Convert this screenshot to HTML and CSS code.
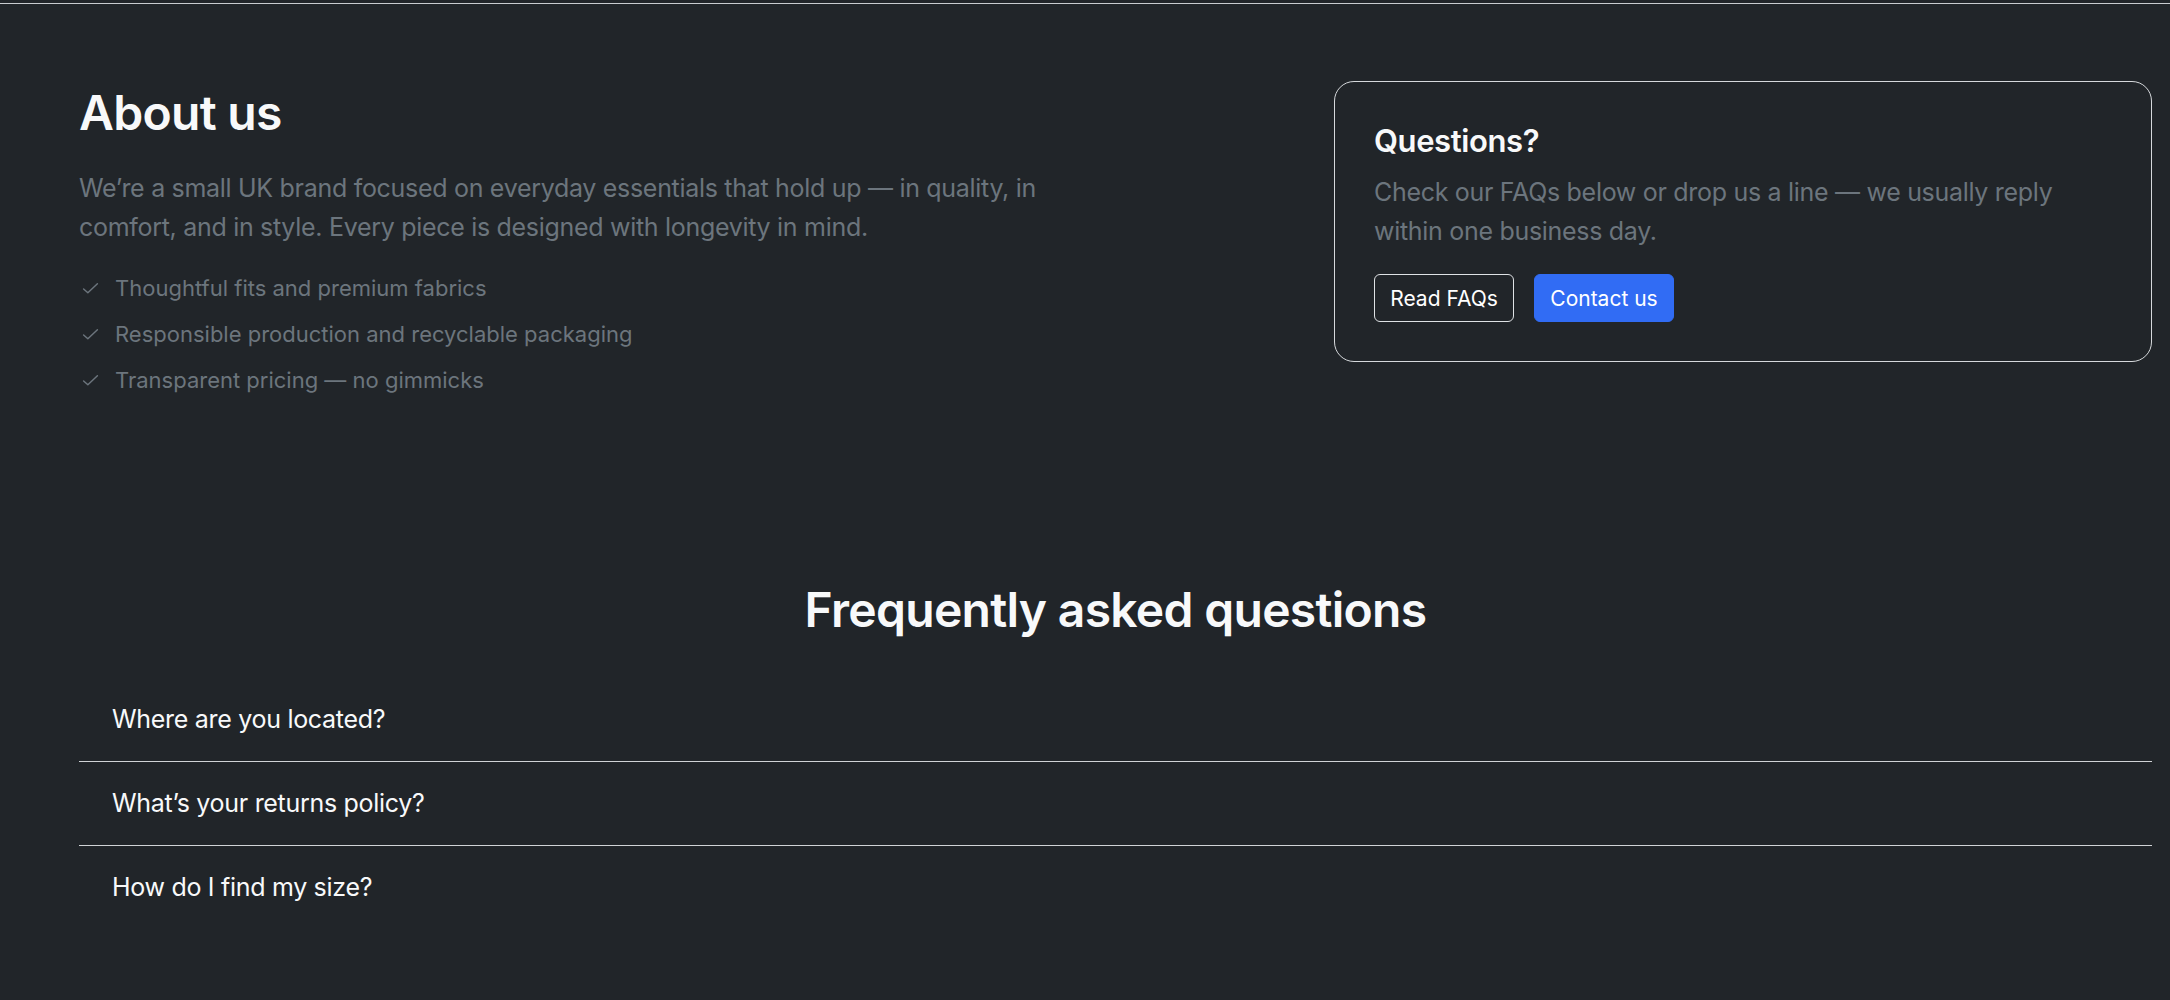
FILE: index.html
```html
<!DOCTYPE html>
<html lang="en">
<head>
<meta charset="utf-8">
<title>About us</title>
<link rel="stylesheet" href="styles.css">
</head>
<body>
<div class="page">
  <section class="about">
    <div class="about-text">
      <h1 class="title">About us</h1>
      <p class="lead">We’re a small UK brand focused on everyday essentials that hold up — in quality, in comfort, and in style. Every piece is designed with longevity in mind.</p>
      <ul class="checklist">
        <li><svg class="check" viewBox="0 0 16 16" aria-hidden="true"><path d="M1.5 8.5 L5.5 12 L14.5 3.5"/></svg><span>Thoughtful fits and premium fabrics</span></li>
        <li><svg class="check" viewBox="0 0 16 16" aria-hidden="true"><path d="M1.5 8.5 L5.5 12 L14.5 3.5"/></svg><span>Responsible production and recyclable packaging</span></li>
        <li><svg class="check" viewBox="0 0 16 16" aria-hidden="true"><path d="M1.5 8.5 L5.5 12 L14.5 3.5"/></svg><span>Transparent pricing — no gimmicks</span></li>
      </ul>
    </div>
    <aside class="card">
      <h2 class="card-title">Questions?</h2>
      <p class="card-text">Check our FAQs below or drop us a line — we usually reply within one business day.</p>
      <div class="actions">
        <a class="btn btn-outline" href="#faq">Read FAQs</a>
        <a class="btn btn-primary" href="#contact">Contact us</a>
      </div>
    </aside>
  </section>

  <section class="faq" id="faq">
    <h2 class="title faq-title">Frequently asked questions</h2>
    <div class="accordion">
      <div class="acc-item"><button class="acc-btn" type="button">Where are you located?</button></div>
      <div class="acc-item"><button class="acc-btn" type="button">What’s your returns policy?</button></div>
      <div class="acc-item"><button class="acc-btn" type="button">How do I find my size?</button></div>
    </div>
  </section>
</div>
</body>
</html>
```

FILE: styles.css
```css
html {
  background: #212529;
}
body {
  margin: 0;
  padding-top: 3px;
  background: #212529;
  color: #f8f9fa;
  font-family: Inter, "Noto Sans", "Liberation Sans", sans-serif;
  min-height: 997px;
}
.page {
  border-top: 1px solid #c9ccd0;
  padding: 0 18px 0 79px;
}
.about {
  display: grid;
  grid-template-columns: 1fr 818px;
  column-gap: 40px;
  align-items: start;
  padding-top: 77px;
}
.title {
  margin: 0;
  font-size: 48px;
  line-height: 1.2;
  font-weight: 600;
  letter-spacing: -0.7px;
  color: #f8f9fa;
}
.about-text .title {
  margin-top: 3px;
}
.lead {
  margin: 27px 0 0;
  font-size: 25px;
  line-height: 39px;
  letter-spacing: -0.3px;
  color: #6c757d;
  max-width: 990px;
}
.checklist {
  list-style: none;
  margin: 26px 0 0;
  padding: 0;
  display: flex;
  flex-direction: column;
  gap: 14.5px;
}
.checklist li {
  display: flex;
  align-items: center;
  gap: 16px;
  font-size: 22px;
  line-height: 31.5px;
  color: #6c757d;
  padding-left: 3px;
}
.check {
  width: 17px;
  height: 17px;
  flex: none;
  fill: none;
  stroke: #6c757d;
  stroke-width: 1.4;
  stroke-linecap: round;
  stroke-linejoin: round;
}
.card {
  border: 1px solid #d6d9dc;
  border-radius: 20px;
  padding: 40px 39px 39px;
}
.card-title {
  margin: 0;
  font-size: 31px;
  line-height: 1.2;
  font-weight: 600;
  letter-spacing: -0.4px;
  color: #f8f9fa;
}
.card-text {
  margin: 14px 0 0;
  font-size: 25px;
  line-height: 38.5px;
  letter-spacing: -0.3px;
  color: #6c757d;
}
.actions {
  display: flex;
  gap: 20px;
  margin-top: 24px;
}
.btn {
  display: inline-flex;
  align-items: center;
  justify-content: center;
  box-sizing: border-box;
  height: 48px;
  width: 140px;
  border-radius: 6px;
  font-size: 21px;
  color: #ffffff;
  text-decoration: none;
}
.btn-outline {
  border: 1px solid #dfe2e5;
}
.btn-primary {
  background: #316cf4;
  border: 1px solid #316cf4;
}
.faq {
  padding-top: 185px;
}
.faq-title {
  text-align: center;
}
.accordion {
  margin-top: 39px;
}
.acc-item {
  border-bottom: 1px solid #d0d3d6;
}
.acc-item:last-child {
  border-bottom: none;
}
.acc-btn {
  display: flex;
  align-items: center;
  width: 100%;
  height: 83px;
  padding: 0 33px;
  margin: 0;
  border: none;
  background: transparent;
  color: #f8f9fa;
  font-family: inherit;
  font-size: 25px;
  letter-spacing: -0.3px;
  text-align: left;
  cursor: pointer;
}
```
